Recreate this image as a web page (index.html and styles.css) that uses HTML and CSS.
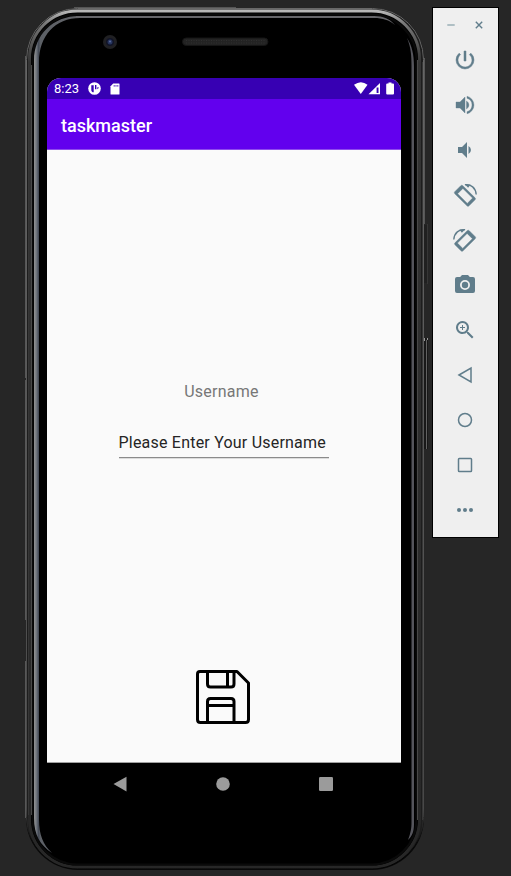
FILE: index.html
```
<!DOCTYPE html>
<html lang="en">
<head>
<meta charset="utf-8">
<title>taskmaster</title>
<link rel="stylesheet" href="styles.css">
</head>
<body>
<main class="desktop">
  <section class="phone">
    <svg class="phone-art" viewBox="25 7 405 864" aria-hidden="true">
      <defs>
        <linearGradient id="rim" x1="0" y1="0" x2="0" y2="1">
          <stop offset="0" stop-color="#b8b8b8"/><stop offset=".015" stop-color="#777"/><stop offset=".06" stop-color="#353535"/><stop offset="1" stop-color="#272727"/>
        </linearGradient>
        <linearGradient id="edge" x1="0" y1="0" x2="0" y2="1">
          <stop offset="0" stop-color="#686868"/><stop offset=".93" stop-color="#484848"/><stop offset=".97" stop-color="#080808"/><stop offset="1" stop-color="#000"/>
        </linearGradient>
        <linearGradient id="shine" gradientUnits="userSpaceOnUse" x1="34" y1="0" x2="90" y2="0">
          <stop offset="0" stop-color="#929292"/><stop offset=".04" stop-color="#747980"/><stop offset=".085" stop-color="#414753"/><stop offset=".11" stop-color="#5c6066"/><stop offset="1" stop-color="#66666a"/>
        </linearGradient>
      </defs>
      <path d="M423 225h5v58h-5z" fill="#202020"/>
      <path d="M427.500 224v60" stroke="#363636"/>
      <path d="M424 338h4v111h-4z" fill="#181818"/>
      <path d="M426.500 340v109" stroke="#626262"/>
      <path d="M424.500 338v3M427.500 338v2" stroke="#999"/>
      <rect x="26" y="8" width="398" height="862" rx="52" fill="#080808"/>
      <rect x="26.500" y="8.500" width="397" height="860" rx="51" fill="#1d1d1d" stroke="url(#edge)"/>
      <rect x="29.500" y="11" width="390" height="856" rx="48" fill="#000" stroke="url(#rim)" stroke-width="3"/>
      <rect x="32.500" y="14.500" width="384" height="850" rx="45" fill="#000" stroke="#0a0a0a" stroke-width="2"/>
      <path d="M31.500 65v750M417.500 60v760" stroke="#484848"/>
      <path d="M28.500 65v750M422.500 62v758" stroke="#363636"/>
      <path d="M25.500 56v322M25.500 380v240M25.500 661v157M424.500 58v166" stroke="#575757"/>
      <path d="M74 7.500h162" stroke="#555"/>
      <path d="M34 60C34 35 53 16 79 16H374C383 16 390 19 395 25C389 20 383 18 374 18H80C55 18 39 36 39 62V820C39 834 43 845 52 853C40 845 34 835 34 818Z" fill="url(#shine)"/>
      <path d="M76 17h299" stroke="#66666a" stroke-width="2"/>
      <path d="M407 38C412 46 414 54 414 67V824C414 832 412 836 408 840C411 832 411.500 828 411.500 822V66C411.500 55 411 48 407 38Z" fill="#55555c"/>
      <circle cx="110" cy="42" r="7" fill="#202023"/>
      <circle cx="110" cy="42" r="4" fill="#111426"/>
      <circle cx="110" cy="42" r="2.500" fill="#26345e"/><circle cx="110" cy="41.500" r="1" fill="#5a6ba0"/>
      <rect x="182.500" y="38" width="85.500" height="7.500" rx="3.700" fill="#232323" stroke="#151515"/>
      <path d="M186 40.500h79M186 43h79" stroke="#303030" stroke-dasharray="1 1.500"/>
    </svg>
    <div class="screen">
      <header class="status">
        <span class="clock">8:23</span>
        <svg class="notice" viewBox="0 0 13 13"><circle cx="6.500" cy="6.500" r="6.300" fill="#fff"/><path d="M3.300 3.200h2.400v7H4.600q-1.300-.8-1.300-2zM7 3h1.400v4.300H7zM9.300 5.300h1.500q-.2 1.700-1.500 2z" fill="#3700b3"/></svg>
        <svg class="sd" viewBox="0 0 10 12"><path d="M3.200.5H9q.5 0 .5.500v10q0 .5-.5.500H1q-.5 0-.5-.5V3.300z" fill="#fff"/><path d="M4.200 2v1.700M6 2v1.700M7.800 2v1.700" stroke="#3700b3" stroke-width=".8"/></svg>
        <svg class="signals" viewBox="0 0 41 13"><path d="M0 2.800Q7-2.200 13.500 2.800L6.800 12z" fill="#fff"/><path d="M14.500 12.300 26 1v11.300z" fill="#fff"/><path d="M22.600 5.500h1.900v5.500h-1.900z" fill="#3700b3"/><path d="M34.500 1.500V.5h3v1h1.500q1 0 1 1v9q0 1-1 1h-5.800q-1 0-1-1v-9q0-1 1-1z" fill="#fff"/></svg>
      </header>
      <h1 class="appbar">taskmaster</h1>
      <div class="content">
        <label class="label" for="name">Username</label>
        <div class="field" id="name">Please Enter Your Username</div>
        <svg class="save" viewBox="0 0 54 54" fill="none" stroke="#000" stroke-width="3" stroke-linejoin="round">
          <path d="M4 1.500h37L52.500 13v36.500q0 3-3 3H4.500q-3 0-3-3V4q0-2.500 2.500-2.500z"/>
          <path d="M11.500 2v12q0 3 3 3h20.500q3 0 3-3V2M31.500 2v15M11.500 52V31.500q0-3 3-3h20.500q3 0 3 3V52M12 35.500h26"/>
        </svg>
      </div>
    </div>
    <nav class="navbar">
      <svg viewBox="0 0 16 16"><path d="M1.500 8 14.500.8v14.600z"/></svg>
      <svg viewBox="0 0 16 16"><circle cx="8" cy="8" r="6.800"/></svg>
      <svg viewBox="0 0 16 16"><rect x="1" y="1" width="14" height="14" rx="1.200"/></svg>
    </nav>
  </section>
  <aside class="tools">
    <div class="window-buttons">
      <svg viewBox="0 0 8 8"><path d="M.3 4h7.400" stroke="#9aafb6" stroke-width="1.500"/></svg>
      <svg viewBox="0 0 8 8"><path d="m.8.8 6.400 6.400m0-6.400L.8 7.200" stroke="#607d8b" stroke-width="1.400"/></svg>
    </div>
    <svg viewBox="0 0 24 24"><path stroke="#607d8b" stroke-width=".5" d="M13 3h-2v10h2zM17.830 5.170l-1.420 1.420A6.920 6.920 0 0 1 19 12a7 7 0 1 1-11.420-5.420L6.170 5.170A8.930 8.930 0 0 0 3 12a9 9 0 0 0 18 0 8.930 8.930 0 0 0-3.170-6.830z"/></svg>
    <svg viewBox="0 0 24 24"><path stroke="#607d8b" stroke-width=".35" d="M3 9v6h4l5 5V4L7 9zm10.500-1v8a4.500 4.500 0 0 0 0-8zm.5-4.770v2.060a7 7 0 0 1 0 13.420v2.060a9 9 0 0 0 0-17.540z"/></svg>
    <svg viewBox="0 0 24 24"><path d="M5 9v6h4l5 5V4L9 9zm10.500-1v8a4.500 4.500 0 0 0 0-8z"/></svg>
    <svg viewBox="0 0 24 24"><path stroke="#607d8b" stroke-width=".5" d="M7.800 2.700q1-1 2 0L22 14.800q1 1 0 2l-6 6q-1 1-2 0L1.800 10.700q-1-1 0-2zM9.900 5.400 4.600 10.700 14.300 20.400l5.300-5.300z" fill-rule="evenodd"/><path d="M12 1.700C18 1 22.700 5 23.200 11.500" fill="none" stroke="#607d8b" stroke-width="1.400"/><path d="m11.500 1 6 .8-2.400 2.900z"/></svg>
    <svg viewBox="0 0 24 24"><g transform="matrix(-1 0 0 1 24 0)"><path stroke="#607d8b" stroke-width=".5" d="M7.800 2.700q1-1 2 0L22 14.800q1 1 0 2l-6 6q-1 1-2 0L1.800 10.700q-1-1 0-2zM9.900 5.400 4.600 10.700 14.300 20.400l5.300-5.300z" fill-rule="evenodd"/><path d="M12 1.700C18 1 22.700 5 23.200 11.500" fill="none" stroke="#607d8b" stroke-width="1.400"/><path d="m11.500 1 6 .8-2.400 2.900z"/></g></svg>
    <svg viewBox="0 0 24 24"><path fill-rule="evenodd" d="M9 2 7.170 4H4a2 2 0 0 0-2 2v12a2 2 0 0 0 2 2h16a2 2 0 0 0 2-2V6a2 2 0 0 0-2-2h-3.170L15 2zm3 15a5 5 0 1 1 0-10 5 5 0 0 1 0 10z"/><circle cx="12" cy="12" r="3.200"/></svg>
    <svg viewBox="0 0 24 24"><path d="M15.500 14h-.79l-.28-.27A6.500 6.500 0 1 0 13.730 14.430l.27.280v.79l5 4.990L20.490 19zm-6 0a4.500 4.500 0 1 1 0-9 4.500 4.500 0 0 1 0 9zM12 10h-2v2H9v-2H7V9h2V7h1v2h2z"/></svg>
    <svg class="line" viewBox="0 0 24 24"><path d="M6 12 18 5v14z"/></svg>
    <svg class="line" viewBox="0 0 24 24"><circle cx="12" cy="12" r="6.500"/></svg>
    <svg class="line" viewBox="0 0 24 24"><rect x="5.500" y="5.500" width="13" height="13" rx=".8"/></svg>
    <svg viewBox="0 0 24 24"><circle cx="6" cy="12" r="2"/><circle cx="12" cy="12" r="2"/><circle cx="18" cy="12" r="2"/></svg>
  </aside>
</main>
</body>
</html>
```
FILE: styles.css
```
* { box-sizing: border-box; }
body { margin: 0; background: #262626; font-family: Roboto, "Liberation Sans", sans-serif; }
svg { display: block; flex: none; }
.desktop { width: 511px; height: 876px; display: flex; align-items: flex-start; gap: 2px; padding: 7px 0 0 25px; overflow: hidden; }
.phone { position: relative; width: 405px; height: 864px; padding: 71px 0 0 22px; flex: none; }
.phone-art { position: absolute; left: 0; top: 0; width: 405px; height: 864px; }
.screen { position: relative; width: 354px; height: 685px; background: #fafafa; border-radius: 14px 14px 0 0; overflow: hidden; display: flex; flex-direction: column; border-bottom: 1px solid #a0a0a0; }
.status { height: 21px; flex: none; background: #3700b3; display: flex; align-items: center; padding: 0 7px; color: #fff; }
.clock { font-size: 13px; line-height: 21px; width: 34px; }
.notice { width: 13px; height: 13px; }
.sd { width: 10px; height: 12px; margin-left: 9px; }
.signals { width: 41px; height: 13px; margin-left: auto; margin-right: -1px; }
.appbar { margin: 0; height: 51px; flex: none; background: #6200ee; color: #fff; font-size: 18px; font-weight: 500; line-height: 53px; padding-left: 14px; border-bottom: 1px solid #8f4bed; }
.content { flex: 1; display: flex; flex-direction: column; align-items: center; padding-top: 231px; }
.label { color: #777; font-size: 16px; line-height: 22px; letter-spacing: .25px; margin-right: 5px; }
.field { width: 210px; margin-top: 28px; margin-left: -1px; height: 27px; font-size: 16px; line-height: 23px; letter-spacing: .21px; color: #252525; border-bottom: 1px solid #8b8b8b; box-shadow: 0 1px 0 #dcdcdc; white-space: nowrap; }
.save { width: 54px; height: 54px; margin-top: 212px; margin-right: 2px; }
.navbar { position: relative; width: 354px; display: flex; justify-content: space-between; padding: 13px 67px 0 65px; }
.navbar svg { width: 16px; height: 16px; fill: #9b9b9b; }
.tools { width: 67px; height: 531px; flex: none; background: #efefef; border: 1px solid #000; display: flex; flex-direction: column; align-items: center; gap: 21px; padding: 13px 1px 0 0; }
.tools > svg { width: 24px; height: 24px; fill: #607d8b; }
.tools > .line { fill: none; stroke: #607d8b; stroke-width: 1.500; }
.window-buttons { display: flex; gap: 20px; margin-bottom: -2px; }
.window-buttons svg { width: 8px; height: 8px; }
```
